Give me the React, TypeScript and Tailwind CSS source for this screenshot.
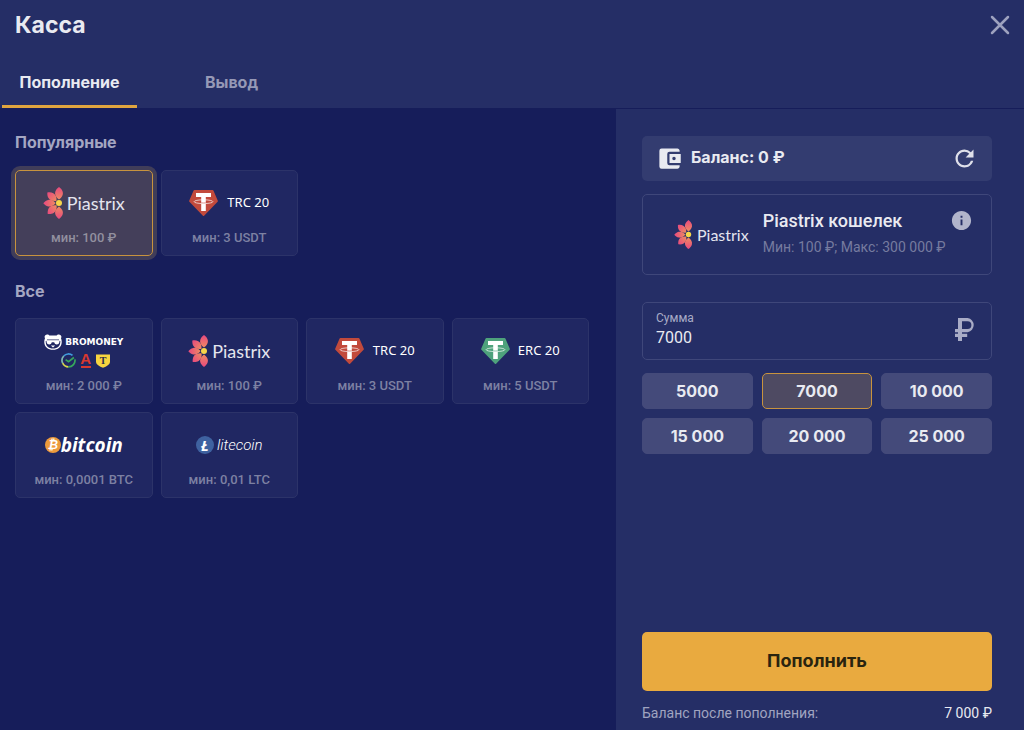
import { useState, type ReactNode } from "react";
import clsx from "clsx";
import { MdAccountBalanceWallet, MdInfo, MdRefresh } from "react-icons/md";

type LogoType =
  | "piastrix"
  | "trc20"
  | "erc20"
  | "bromoney"
  | "bitcoin"
  | "litecoin";

interface Method {
  id: string;
  logo: LogoType;
  name: string;
  min: string;
}

const popularMethods: Method[] = [
  { id: "popular-piastrix", logo: "piastrix", name: "Piastrix", min: "100 ₽" },
  { id: "popular-trc20", logo: "trc20", name: "TRC 20", min: "3 USDT" },
];

const allMethods: Method[] = [
  { id: "bromoney", logo: "bromoney", name: "Bromoney", min: "2 000 ₽" },
  { id: "piastrix", logo: "piastrix", name: "Piastrix", min: "100 ₽" },
  { id: "trc20", logo: "trc20", name: "TRC 20", min: "3 USDT" },
  { id: "erc20", logo: "erc20", name: "ERC 20", min: "5 USDT" },
  { id: "bitcoin", logo: "bitcoin", name: "Bitcoin", min: "0,0001 BTC" },
  { id: "litecoin", logo: "litecoin", name: "Litecoin", min: "0,01 LTC" },
];

const amounts = ["5000", "7000", "10 000", "15 000", "20 000", "25 000"];

const PETAL = "M0 -3.4C-3.2 -5.4 -5 -8.2 -4.2 -11C-3.6 -13.2 -1.8 -14.8 0 -16C1.8 -14.8 3.6 -13.2 4.2 -11C5 -8.2 3.2 -5.4 0 -3.4Z";

function Flower({ className }: { className: string }) {
  return (
    <svg className={className} viewBox="0 0 21 32" aria-hidden="true">
      <defs>
        <linearGradient id="petal" x1="0" y1="0" x2="0" y2="1">
          <stop offset="0" stopColor="#e8487f" />
          <stop offset="1" stopColor="#ee8a62" />
        </linearGradient>
      </defs>
      <g transform="translate(16 16)" fill="url(#petal)">
        <path d={PETAL} transform="scale(.9 1)" />
        <path d={PETAL} transform="rotate(-48) scale(.82 .98)" />
        <path d={PETAL} transform="rotate(-91) scale(.76 .98)" />
        <path d={PETAL} transform="rotate(-134) scale(.82 .98)" />
        <path d={PETAL} transform="rotate(180) scale(.9 1)" />
        <circle r="3" fill="#f5d54a" />
      </g>
    </svg>
  );
}

function Tether({ color }: { color: string }) {
  return (
    <svg className="h-[26px] w-[29px]" viewBox="0 0 29 26" aria-hidden="true">
      <path
        d="M5.4 0h18.2a1 1 0 0 1 .8.4l4.4 10.4a1 1 0 0 1-.2 1L15.1 25.7a.9.9 0 0 1-1.2 0L.4 11.8a1 1 0 0 1-.2-1L4.6.4A1 1 0 0 1 5.4 0Z"
        fill={color}
      />
      <path d="M7 3h15v4h-5.2v14h-4.6V7H7Z" fill="#fff" />
      <ellipse
        cx="14.5"
        cy="11.7"
        rx="9.4"
        ry="1.9"
        fill="none"
        stroke="#fff"
        strokeOpacity=".75"
        strokeWidth=".9"
      />
      <path d="M12.2 12.9q2.3.2 4.6 0" fill="none" stroke={color} strokeWidth=".6" />
    </svg>
  );
}

function Panda() {
  return (
    <svg className="h-4 w-[18px]" viewBox="0 0 18 16" aria-hidden="true">
      <path
        d="M1 4.2C-.2 2 1.400.3 3.300.4c1 0 1.700.5 2.100 1.100h7.200c.4-.6 1.100-1.100 2.100-1.100C16.600.3 18.200 2 17 4.200c.6 1.300.8 2.700.7 4.300C17.500 13 14 15.800 9 15.800S.5 13 .3 8.500C.2 6.900.4 5.500 1 4.200Z"
        fill="#fff"
      />
      <path d="M1.700 7.500C1.600 12 4.500 14.600 9 14.600s7.400-2.600 7.300-7.100l-.5-.8H2.200Z" fill="#202762" />
      <path
        d="M2.300 6h13.400l-.5 2.700c-.3 1.200-1.200 1.700-2.400 1.700-1.300 0-2.200-.7-2.600-2.200H7.800C7.400 9.700 6.500 10.400 5.200 10.400 4 10.400 3.100 9.900 2.800 8.700Z"
        fill="#fff"
      />
      <path d="M6.800 11.600h4.400L9 13.500Z" fill="#fff" />
      <path d="M3 5.800h12" stroke="#202762" strokeWidth=".7" />
    </svg>
  );
}

function Sber() {
  return (
    <svg className="size-[15px]" viewBox="0 0 15 15" fill="none" aria-hidden="true">
      <g strokeWidth="1.700">
        <path d="M2.700 3A6.500 6.500 0 0 1 11.500 2.400" stroke="#3f9bdc" />
        <path d="M2.700 3A6.500 6.500 0 0 0 1.700 10.200" stroke="#7fb8b0" />
        <path d="M1.700 10.200A6.500 6.500 0 0 0 7.500 13.900" stroke="#d8d84a" />
        <path d="M7.500 13.900A6.500 6.500 0 0 0 13.900 6.300" stroke="#36a85c" />
        <path d="m4.600 6.600 2.900 2.100 5.400-4.200" stroke="#36a85c" />
      </g>
    </svg>
  );
}

function BromoneyLogo() {
  return (
    <span className="flex flex-col items-center gap-[3px]">
      <span className="flex items-center gap-[3px]">
        <Panda />
        <span className="font-['DejaVu_Sans',sans-serif] text-[9px] leading-4 font-bold text-white">
          BROMONEY
        </span>
      </span>
      <span className="flex items-center gap-[5px] pl-[3px]">
        <Sber />
        <span className="flex h-[15px] w-[10px] justify-center border-b-2 border-[#d8382f] font-['Liberation_Sans',sans-serif] text-[15px] leading-3 font-bold text-[#d8382f]">
          A
        </span>
        <svg className="h-[14px] w-[14px]" viewBox="0 0 14 14" aria-hidden="true">
          <path d="M0 .5h14v7c0 3.200-3.500 5-7 6.300C3.500 12.500 0 10.700 0 7.500Z" fill="#f7d540" />
          <text
            x="7"
            y="10"
            textAnchor="middle"
            fontFamily="Liberation Serif, serif"
            fontWeight="700"
            fontSize="10"
            fill="#2b2d4a"
          >
            T
          </text>
        </svg>
      </span>
    </span>
  );
}

function Coin({ letter, color }: { letter: string; color: string }) {
  return (
    <span
      className={clsx(
        "flex items-center justify-center rounded-full font-['Open_Sans',sans-serif] font-bold text-white italic",
        color,
        letter === "₿" ? "size-4 text-[12px]" : "size-[18px] text-[15px]"
      )}
    >
      {letter}
    </span>
  );
}

function MethodLogo({ logo }: { logo: LogoType }) {
  const logos: Record<LogoType, ReactNode> = {
    piastrix: (
      <>
        <Flower className="h-8 w-[21px]" />
        <span className="ml-[3px] font-[Lato,sans-serif] text-[18px] text-[#e4e5ee]">
          Piastrix
        </span>
      </>
    ),
    trc20: (
      <>
        <Tether color="#c24a3c" />
        <span className="ml-[9px] font-['Noto_Sans',sans-serif] text-[13px] text-white">
          TRC 20
        </span>
      </>
    ),
    erc20: (
      <>
        <Tether color="#4ea27c" />
        <span className="ml-2 font-['Noto_Sans',sans-serif] text-[13px] text-white">
          ERC 20
        </span>
      </>
    ),
    bromoney: <BromoneyLogo />,
    bitcoin: (
      <>
        <Coin letter="₿" color="bg-[#ec9a3c]" />
        <span className="font-['Open_Sans',sans-serif] text-[19px] font-bold text-white italic">
          bitcoin
        </span>
      </>
    ),
    litecoin: (
      <>
        <Coin letter="Ł" color="bg-[#3f62a0]" />
        <span className="ml-[3px] font-[Roboto,sans-serif] text-[15px] font-light text-white italic">
          litecoin
        </span>
      </>
    ),
  };

  return (
    <span className="flex h-14 items-center justify-center pt-[2px]">{logos[logo]}</span>
  );
}

interface MethodCardProps {
  method: Method;
  selected: boolean;
  onSelect: (id: string) => void;
}

function MethodCard({ method, selected, onSelect }: MethodCardProps) {
  return (
    <button
      type="button"
      aria-label={`${method.name}, мин: ${method.min}`}
      aria-pressed={selected}
      onClick={() => onSelect(method.id)}
      className={clsx(
        "rounded-[5px] border pt-[3px] pb-[9px] whitespace-nowrap",
        selected
          ? "border-[#c8933e] bg-[#443f5a] ring-4 ring-[#403d59]"
          : "border-[#2c3369] bg-[#202762]"
      )}
    >
      <MethodLogo logo={method.logo} />
      <span
        className={clsx(
          "block text-[13px] leading-4 font-medium",
          selected ? "text-[#92909f]" : "text-[#7d81a2]"
        )}
      >
        мин: {method.min}
      </span>
    </button>
  );
}

function RubleIcon() {
  return (
    <svg className="h-[23px] w-5" viewBox="0 0 20 23" fill="#a9acc6" aria-hidden="true">
      <path
        fillRule="evenodd"
        d="M3 0h9.700a7.200 7.200 0 0 1 0 14.200H7v1.600h5.200V19H7v4H3v-4H0v-3.200h3v-1.600H0V11h3V0Zm4 3.200V11h5.500a3.900 3.900 0 0 0 0-7.800H7Z"
      />
    </svg>
  );
}

export default function App() {
  const [tab, setTab] = useState("deposit");
  const [selected, setSelected] = useState("popular-piastrix");
  const [amount, setAmount] = useState("7000");

  return (
    <div className="flex min-h-screen flex-col bg-[#161d5a] font-[Roboto,'Noto_Sans',sans-serif] text-[#e9eaf1]">
      <header className="bg-[#252e66]">
        <div className="flex h-[50px] items-center justify-between px-[14px]">
          <h1 className="pl-px font-[Inter,sans-serif] text-[23px] leading-7 font-bold">Касса</h1>
          <button type="button" aria-label="Закрыть">
            <svg className="size-5" viewBox="0 0 20 20" aria-hidden="true">
              <path
                d="M2 2l16 16M18 2 2 18"
                stroke="#9ea2bf"
                strokeWidth="2.5"
                strokeLinecap="round"
              />
            </svg>
          </button>
        </div>
        <nav className="flex gap-[27px] pl-[2px] font-[Inter,sans-serif] text-[16px] font-bold">
          {[
            { id: "deposit", label: "Пополнение" },
            { id: "withdraw", label: "Вывод" },
          ].map(({ id, label }) => (
            <button
              key={id}
              type="button"
              onClick={() => setTab(id)}
              className={clsx(
                "h-[58px] w-[135px] border-b-[3px] pt-[9px]",
                tab === id
                  ? "border-[#e0a53f]"
                  : "border-transparent text-[#9699b6]"
              )}
            >
              {label}
            </button>
          ))}
        </nav>
      </header>

      <main className="flex flex-1">
        <section className="flex-1 pt-6 pr-[27px] pl-[15px]">
          <h2 className="font-[Inter,sans-serif] text-[16px] leading-5 font-bold text-[#a4a6c2]">
            Популярные
          </h2>
          <div className="mt-[18px] grid grid-cols-4 gap-2">
            {popularMethods.map((method) => (
              <MethodCard
                key={method.id}
                method={method}
                selected={selected === method.id}
                onSelect={setSelected}
              />
            ))}
          </div>
          <h2 className="mt-[25px] font-[Inter,sans-serif] text-[16px] leading-5 font-bold text-[#a4a6c2]">
            Все
          </h2>
          <div className="mt-[17px] grid grid-cols-4 gap-2">
            {allMethods.map((method) => (
              <MethodCard
                key={method.id}
                method={method}
                selected={selected === method.id}
                onSelect={setSelected}
              />
            ))}
          </div>
        </section>

        <aside className="mt-px flex w-[408px] flex-col bg-[#252e66] pt-[27px] pr-8 pb-[7px] pl-[26px]">
          <div className="flex h-[45px] items-center rounded-[5px] bg-[#333c70] px-[14px]">
            <MdAccountBalanceWallet className="size-[27px] text-[#e9eaf1]" />
            <span className="ml-2 pb-[3px] font-[Inter,sans-serif] text-[16px] font-bold">
              Баланс: 0 ₽
            </span>
            <button type="button" aria-label="Обновить" className="ml-auto">
              <MdRefresh className="size-[27px] text-[#dfe0ea]" />
            </button>
          </div>

          <div className="mt-[13px] flex h-[81px] rounded-[5px] border border-[#3f477a] pr-[18px] pl-[31px]">
            <div className="flex items-center">
              <Flower className="h-[29px] w-[19px]" />
              <span className="ml-1 font-[Lato,sans-serif] text-[16px] text-[#e4e5ee]">
                Piastrix
              </span>
            </div>
            <div className="ml-[14px] pt-[14px]">
              <p className="text-[18px] leading-6 font-medium">Piastrix кошелек</p>
              <p className="mt-1 text-[14px] leading-5 text-[#767b9f]">
                Мин: 100 ₽; Макс: 300 000 ₽
              </p>
            </div>
            <button type="button" aria-label="Информация" className="mt-[14px] ml-auto self-start">
              <MdInfo className="size-[23px] text-[#b1b4cb]" />
            </button>
          </div>

          <div className="mt-[27px] flex h-[58px] items-center rounded-[5px] border border-[#3f477a] pr-4 pb-[3px] pl-[13px]">
            <div className="min-w-0 flex-1">
              <label htmlFor="amount" className="block text-[12px] leading-4 text-[#a9acc6]">
                Сумма
              </label>
              <input
                id="amount"
                inputMode="numeric"
                value={amount}
                onChange={(event) => setAmount(event.target.value)}
                className="block w-full text-[16px] leading-6 outline-none"
              />
            </div>
            <RubleIcon />
          </div>

          <div className="mt-[13px] grid grid-cols-3 gap-[9px] font-[Inter,sans-serif] text-[16px] leading-5 font-bold">
            {amounts.map((item) => (
              <button
                key={item}
                type="button"
                onClick={() => setAmount(item.replace(" ", ""))}
                className={clsx(
                  "h-9 rounded-[5px] border",
                  amount === item.replace(" ", "")
                    ? "border-[#c8933e] bg-[#4e4a62]"
                    : "border-[#444a7a] bg-[#444a7a]"
                )}
              >
                {item}
              </button>
            ))}
          </div>

          <div className="mt-auto pt-6">
            <button
              type="button"
              className="h-[59px] w-full rounded-[5px] bg-[#e9aa3f] pb-[2px] font-[Inter,sans-serif] text-[18px] font-bold text-[#29240f]"
            >
              Пополнить
            </button>
            <div className="mt-3 flex justify-between text-[14px] leading-5">
              <span className="text-[#a0a4c0]">Баланс после пополнения:</span>
              <span>{amount.replace(/\B(?=(\d{3})+$)/g, " ")} ₽</span>
            </div>
          </div>
        </aside>
      </main>
    </div>
  );
}
